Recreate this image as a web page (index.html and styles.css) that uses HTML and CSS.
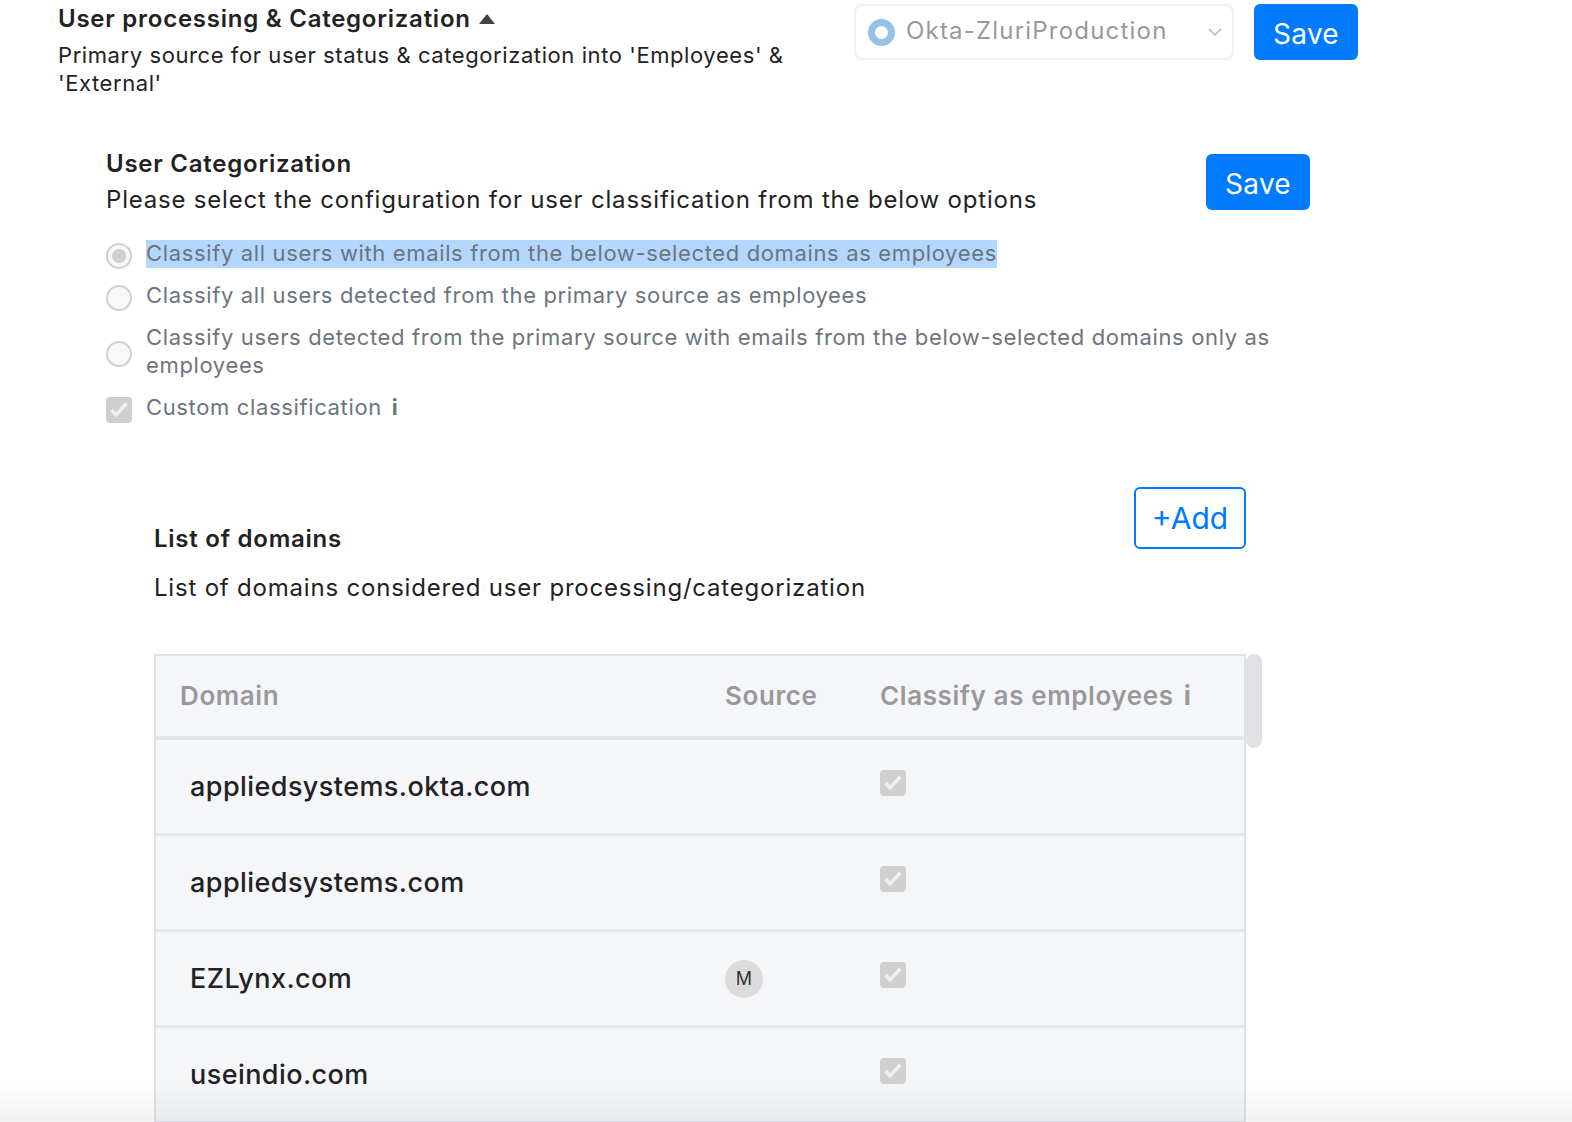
FILE: index.html
```html
<!DOCTYPE html>
<html lang="en">
<head>
<meta charset="utf-8">
<title>User processing &amp; Categorization</title>
<link rel="stylesheet" href="styles.css">
</head>
<body>
<main class="page">
  <section class="source">
    <div class="source-text">
      <h2 class="title">User processing &amp; Categorization <span class="caret"></span></h2>
      <p class="desc">Primary source for user status &amp; categorization into 'Employees' &amp; 'External'</p>
    </div>
    <div class="select">
      <span class="ring"></span>
      <span class="select-label">Okta-ZluriProduction</span>
      <svg class="chevron" viewBox="0 0 16 10" width="16" height="10"><path d="M2 2l6 6 6-6" fill="none" stroke="#c4c4c4" stroke-width="1.8"/></svg>
    </div>
    <button class="btn">Save</button>
  </section>

  <section class="category">
    <div class="category-head">
      <div>
        <h3 class="title">User Categorization</h3>
        <p class="desc">Please select the configuration for user classification from the below options</p>
      </div>
      <button class="btn">Save</button>
    </div>
    <ul class="options">
      <li class="option"><span class="radio on"></span><span class="opt-text"><span class="selected">Classify all users with emails from the below-selected domains as employees</span></span></li>
      <li class="option"><span class="radio"></span><span class="opt-text">Classify all users detected from the primary source as employees</span></li>
      <li class="option"><span class="radio"></span><span class="opt-text">Classify users detected from the primary source with emails from the below-selected domains only as employees</span></li>
      <li class="option"><span class="check"><svg viewBox="0 0 26 26"><path d="M5.5 13l4.5 5L20.5 6.5" fill="none" stroke="#f0f0f0" stroke-width="3.5"/></svg></span><span class="opt-text">Custom classification <b class="info">i</b></span></li>
    </ul>
  </section>

  <section class="domains">
    <div class="domains-head">
      <div>
        <h3 class="title">List of domains</h3>
        <p class="desc">List of domains considered user processing/categorization</p>
      </div>
      <button class="btn-outline">+Add</button>
    </div>
    <div class="table-wrap">
      <div class="table">
        <div class="row head">
          <span class="c-domain">Domain</span>
          <span>Source</span>
          <span>Classify as employees <b class="info">i</b></span>
        </div>
        <div class="row">
          <span class="c-domain name">appliedsystems.okta.com</span>
          <span></span>
          <span class="check"><svg viewBox="0 0 26 26"><path d="M5.5 13l4.5 5L20.5 6.5" fill="none" stroke="#f0f0f0" stroke-width="3.5"/></svg></span>
        </div>
        <div class="row">
          <span class="c-domain name">appliedsystems.com</span>
          <span></span>
          <span class="check"><svg viewBox="0 0 26 26"><path d="M5.5 13l4.5 5L20.5 6.5" fill="none" stroke="#f0f0f0" stroke-width="3.5"/></svg></span>
        </div>
        <div class="row">
          <span class="c-domain name">EZLynx.com</span>
          <span class="badge">M</span>
          <span class="check"><svg viewBox="0 0 26 26"><path d="M5.5 13l4.5 5L20.5 6.5" fill="none" stroke="#f0f0f0" stroke-width="3.5"/></svg></span>
        </div>
        <div class="row">
          <span class="c-domain name">useindio.com</span>
          <span></span>
          <span class="check"><svg viewBox="0 0 26 26"><path d="M5.5 13l4.5 5L20.5 6.5" fill="none" stroke="#f0f0f0" stroke-width="3.5"/></svg></span>
        </div>
      </div>
      <div class="scrollbar"></div>
    </div>
  </section>
</main>
<div class="fade"></div>
</body>
</html>
```

FILE: styles.css
```css
* { box-sizing: border-box; }
html, body { margin: 0; height: 1122px; overflow: hidden; background: #fff; }
body { font-family: Inter, "Noto Sans", sans-serif; color: #222; font-size: 24px; line-height: 28px; }
h2, h3, p, ul { margin: 0; padding: 0; }
.page { padding: 4px 0 0 58px; }

.title { font-size: 24px; line-height: 28px; font-weight: 600; color: #222; letter-spacing: 0.75px; }
.desc { font-size: 24px; line-height: 28px; font-weight: 400; color: #222; letter-spacing: 0.8px; }

.source { display: flex; align-items: flex-start; }
.source-text { width: 796px; padding-top: 1px; }
.source-text .desc { margin-top: 8px; font-size: 22px; letter-spacing: 0.58px; }
.caret { display: inline-block; width: 0; height: 0; margin: 0 0 3px 2px; border: 8px solid transparent; border-top: 0; border-bottom: 10px solid #444; }
.select { display: flex; align-items: center; width: 380px; height: 56px; padding: 0 12px; border: 2px solid #f0f0f0; border-radius: 8px; background: #fff; }
.ring { width: 27px; height: 27px; border: 7px solid #94c1e4; border-radius: 50%; background: #fff; flex: none; }
.select-label { flex: 1; margin-left: 11px; margin-top: -2px; color: #999; font-size: 24px; letter-spacing: 1.2px; }
.chevron { flex: none; margin-right: -3px; }
.btn { width: 104px; height: 56px; padding: 3px 0 0; margin-left: 20px; border: 0; border-radius: 6px; background: #007bff; color: #fff; font: 400 28px Inter, sans-serif; letter-spacing: 0.3px; }

.category { margin-top: 52px; margin-left: 48px; width: 1204px; }
.category-head { display: flex; justify-content: space-between; align-items: flex-start; }
.category-head .title { margin-top: 1px; }
.category-head .desc { margin-top: 8px; }
.category-head .btn { margin: 5px 0 0; }
.options { list-style: none; margin-top: 26px; width: 1180px; }
.option { display: flex; align-items: center; margin-bottom: 14px; color: #6c757d; font-size: 22px; letter-spacing: 0.64px; }
.opt-text { margin: -1px 0 1px 14px; line-height: 28px; }
.selected { display: inline-block; line-height: 28px; margin: 1px 0 -1px; padding-bottom: 1px; height: 28px; line-height: 26px; background: #b3d7ff; }
.radio { flex: none; position: relative; width: 26px; height: 26px; margin: 2px 0 -2px; border: 2px solid #d0d0d0; border-radius: 50%; background: #f8f8f8; }
.radio.on::after { content: ""; position: absolute; inset: 4px; border-radius: 50%; background: #cfcfcf; }
.check { display: block; flex: none; width: 26px; height: 26px; border-radius: 4px; background: #cfcfcf; }
.check svg { display: block; width: 26px; height: 26px; }
.option .check { margin: 2px 0 -2px; }
.info { font-weight: 700; margin-left: 3px; }

.domains { margin-top: 65px; margin-left: 96px; width: 1108px; }
.domains-head { display: flex; justify-content: space-between; align-items: flex-start; width: 1092px; }
.domains-head .title { margin-top: 38px; }
.domains-head .desc { margin-top: 21px; }
.btn-outline { width: 112px; height: 62px; padding: 0; border: 2px solid #007bff; border-radius: 6px; background: #fff; color: #007bff; font: 400 30px Inter, sans-serif; }

.table-wrap { display: flex; margin-top: 52px; }
.table { width: 1092px; background: #f4f6fa; border: 2px solid #dee2e6; border-bottom: 0; }
.row { display: grid; grid-template-columns: 569px 155px 1fr; align-items: center; height: 96px; border-bottom: 3px solid #e3e5ea; }
.row.head { height: 84px; border-bottom-width: 4px; color: #999; font-size: 26px; font-weight: 600; letter-spacing: 0.6px; }
.c-domain { padding-left: 24px; }
.name { padding-left: 34px; font-size: 27px; color: #222; font-weight: 500; letter-spacing: 0.43px; }
.row .check { margin-top: -8px; }
.badge { display: flex; align-items: center; justify-content: center; width: 38px; height: 38px; border-radius: 50%; background: #dcdcdc; color: #333; font-size: 18px; }
.scrollbar { width: 16px; height: 94px; border-radius: 8px; background: #e0e1e4; }

.fade { position: fixed; left: 0; right: 0; bottom: 0; height: 40px; pointer-events: none; background: linear-gradient(to bottom, rgba(0,0,0,0), rgba(0,0,0,0.05)); }
```
